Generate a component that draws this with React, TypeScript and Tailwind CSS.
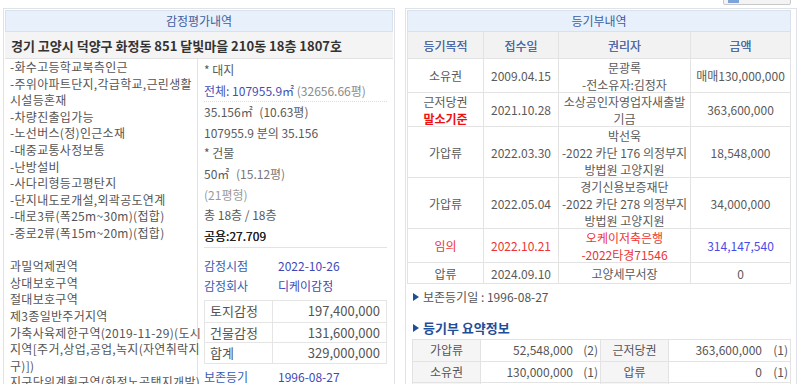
import React from "react";

const F = { fontFamily: '"Noto Sans CJK KR", "Noto Sans", sans-serif' };

function Bullet() {
  return (
    <svg width="6" height="8" viewBox="0 0 6 8" className="shrink-0">
      <path d="M0 0 L6 4 L0 8 Z" fill="#1f4e99" />
    </svg>
  );
}

const leftLines1 = [
  "-화수고등학교북측인근",
  "-주위아파트단지,각급학교,근린생활",
  "시설등혼재",
  "-차량진출입가능",
  "-노선버스(정)인근소재",
  "-대중교통사정보통",
  "-난방설비",
  "-사다리형등고평탄지",
  "-단지내도로개설,외곽공도연계",
  "-대로3류(폭25m~30m)(접합)",
  "-중로2류(폭15m~20m)(접합)",
];
const leftLines2 = [
  "과밀억제권역",
  "상대보호구역",
  "절대보호구역",
  "제3종일반주거지역",
  "가축사육제한구역(2019-11-29)(도시",
  "지역[주거,상업,공업,녹지(자연취락지",
  "구)])",
  "지구단위계획구역(화정노공택지개발)",
];

type Row = {
  h: string;
  purpose: React.ReactNode;
  date: string;
  holder: string[];
  amount: string;
  red?: boolean;
};

const rows: Row[] = [
  { h: "h-[34px]", purpose: "소유권", date: "2009.04.15", holder: ["문광록", "-전소유자:김정자"], amount: "매매130,000,000" },
  {
    h: "h-[34px]",
    purpose: (
      <>
        <div>근저당권</div>
        <div className="font-bold text-[#ee1111]">말소기준</div>
      </>
    ),
    date: "2021.10.28",
    holder: ["소상공인자영업자새출발", "기금"],
    amount: "363,600,000",
  },
  { h: "h-[51px]", purpose: "가압류", date: "2022.03.30", holder: ["박선욱", "-2022 카단 176 의정부지", "방법원 고양지원"], amount: "18,548,000" },
  { h: "h-[51px]", purpose: "가압류", date: "2022.05.04", holder: ["경기신용보증재단", "-2022 카단 278 의정부지", "방법원 고양지원"], amount: "34,000,000" },
  { h: "h-[34px]", purpose: "임의", date: "2022.10.21", holder: ["오케이저축은행", "-2022타경71546"], amount: "314,147,540", red: true },
  { h: "h-[21px]", purpose: "압류", date: "2024.09.10", holder: ["고양세무서장"], amount: "0" },
];

export default function App() {
  return (
    <div style={F} className="relative w-[800px] h-[384px] overflow-hidden bg-white text-[12px] text-[#5a5a5a]">
      {/* top right partial button */}
      <div className="absolute left-[723px] top-[-16px] w-[68px] h-[21px] border border-[#c9c9c9] bg-[#f3f3f3] rounded-[2px] flex items-end px-[4px] pb-[1px]">
        <div className="w-[11px] h-[3px] bg-[#7da3d8]" />
      </div>

      <div className="flex gap-[10px] pl-[3px] pt-[8px]">
        {/* LEFT PANEL */}
        <div className="w-[392px] shrink-0 border border-[#dfe3e8] p-px">
          <div className="h-[22px] bg-[#e8f0fb] border border-[#d8e1ec] text-center leading-[20px] text-[#3e5e9e]">감정평가내역</div>
          <div className="h-[27px] bg-[#f4f4f4] border-b border-[#e2e2e2] px-[6px] font-bold text-[13px] leading-[27px] text-[#333]">
            경기 고양시 덕양구 화정동 851 달빛마을 210동 18층 1807호
          </div>
          <div className="flex">
            <div className="w-[193px] shrink-0 border-r border-[#e3e3e3] pl-[5px] pr-[2px] leading-[16.6px] text-[#555] whitespace-nowrap tracking-[0.3px]">
              {leftLines1.map((l) => (
                <div key={l}>{l}</div>
              ))}
              <div className="h-[16.6px]" />
              {leftLines2.map((l) => (
                <div key={l}>{l}</div>
              ))}
            </div>
            <div className="flex-1 px-[6px] text-[#5a5a5a]">
              <div className="leading-[20.6px] pt-[1px]">
                <div>* 대지</div>
                <div className="border-b border-dotted border-[#dcdcdc]">
                  <span className="text-[#3f4fb5]">전체: 107955.9㎡</span>{" "}
                  <span className="text-[#8a8a8a]">(32656.66평)</span>
                </div>
                <div>
                  35.156㎡ <span className="ml-[4px]">(10.63평)</span>
                </div>
                <div>107955.9 분의 35.156</div>
                <div>* 건물</div>
                <div>
                  50㎡ <span className="ml-[4px] text-[#777]">(15.12평)</span>
                </div>
                <div className="text-[#999]">(21평형)</div>
                <div>총 18층 / 18층</div>
                <div className="border-b border-[#e3e3e3] pb-[1px] text-[#222] [text-shadow:0_0_0.4px_#222]">공용:27.709</div>
              </div>
              <div className="pt-[8px] leading-[20px]">
                <div className="flex">
                  <span className="w-[74px] text-[#3a5bb0]">감정시점</span>
                  <span className="text-[#4048b8]">2022-10-26</span>
                </div>
                <div className="flex">
                  <span className="w-[74px] text-[#3a5bb0]">감정회사</span>
                  <span className="text-[#4048b8]">디케이감정</span>
                </div>
              </div>
              <div className="mt-[4px] border border-[#e5e5e5] text-[13px] text-[#555]">
                {[
                  ["토지감정", "197,400,000"],
                  ["건물감정", "131,600,000"],
                  ["합계", "329,000,000"],
                ].map(([a, b], i) => (
                  <div key={a} className={`flex h-[20.5px] leading-[20px] ${i > 0 ? "border-t border-[#e5e5e5]" : ""}`}>
                    <div className="w-[68px] border-r border-[#e5e5e5] pl-[5px]">{a}</div>
                    <div className="flex-1 text-right pr-[6px]">{b}</div>
                  </div>
                ))}
              </div>
              <div className="flex leading-[24px] mt-[1px]">
                <span className="w-[74px] text-[#3a5bb0]">보존등기</span>
                <span className="text-[#4048b8]">1996-08-27</span>
              </div>
            </div>
          </div>
        </div>

        {/* RIGHT PANEL */}
        <div className="w-[392px] shrink-0 border border-[#dfe3e8] pl-px pr-[5px] pt-px pb-[20px]">
          <div className="h-[22px] bg-[#e8f0fb] border border-[#d8e1ec] text-center leading-[20px] text-[#3e5e9e]">등기부내역</div>
          <div className="border-l border-r border-[#e3e3e3] text-center leading-[17px]">
            <div className="flex h-[27px] bg-[#f2f2f2] border-b border-[#e3e3e3] items-center text-[#4d6aa6] [text-shadow:0_0_0.5px_#4d6aa6]">
              <div className="w-[76px] border-r border-[#e3e3e3] h-full flex items-center justify-center">등기목적</div>
              <div className="w-[75px] border-r border-[#e3e3e3] h-full flex items-center justify-center">접수일</div>
              <div className="w-[132px] border-r border-[#e3e3e3] h-full flex items-center justify-center">권리자</div>
              <div className="flex-1 h-full flex items-center justify-center">금액</div>
            </div>
            {rows.map((r, i) => (
              <div key={i} className={`flex ${r.h} border-b border-[#e3e3e3]`}>
                <div className={`w-[76px] border-r border-[#e3e3e3] flex flex-col items-center justify-center ${r.red ? "text-[#ee3333]" : ""}`}>
                  {r.purpose}
                </div>
                <div className={`w-[75px] border-r border-[#e3e3e3] flex items-center justify-center ${r.red ? "text-[#ee3333]" : ""}`}>
                  {r.date}
                </div>
                <div className={`w-[132px] border-r border-[#e3e3e3] flex flex-col items-center justify-center whitespace-nowrap ${r.red ? "text-[#ee3333]" : ""}`}>
                  {r.holder.map((h) => (
                    <div key={h}>{h}</div>
                  ))}
                </div>
                <div className={`flex-1 flex items-center justify-center ${r.red ? "text-[#4a4ae8]" : ""}`}>{r.amount}</div>
              </div>
            ))}
          </div>
          <div className="flex items-center gap-[4px] pl-[6px] mt-[7px] h-[12px] text-[#555]">
            <Bullet />
            <span>보존등기일 : 1996-08-27</span>
          </div>
          <div className="flex items-center gap-[4px] pl-[6px] mt-[18px] h-[14px] text-[13px] font-bold text-[#1f4e99]">
            <Bullet />
            <span>등기부 요약정보</span>
          </div>
          <div className="ml-[5px] mt-[4px] border border-[#e3e3e3] text-[#555]">
            {[
              ["가압류", "52,548,000", "(2)", "근저당권", "363,600,000", "(1)"],
              ["소유권", "130,000,000", "(1)", "압류", "0", "(1)"],
              ["", "", "", "", "", ""],
            ].map((r, i) => (
              <div key={i} className={`flex h-[21px] leading-[20px] ${i > 0 ? "border-t border-[#e3e3e3]" : ""}`}>
                <div className="w-[68px] bg-[#f5f5f5] border-r border-[#e3e3e3] text-center">{r[0]}</div>
                <div className="w-[120px] border-r border-[#e3e3e3] flex justify-end pr-[2px]">
                  <span>{r[1]}</span>
                  <span className="w-[25px] text-right">{r[2]}</span>
                </div>
                <div className="w-[68px] bg-[#f5f5f5] border-r border-[#e3e3e3] text-center">{r[3]}</div>
                <div className="flex-1 flex justify-end pr-[2px]">
                  <span>{r[4]}</span>
                  <span className="w-[26px] text-right">{r[5]}</span>
                </div>
              </div>
            ))}
          </div>
        </div>
      </div>
    </div>
  );
}
